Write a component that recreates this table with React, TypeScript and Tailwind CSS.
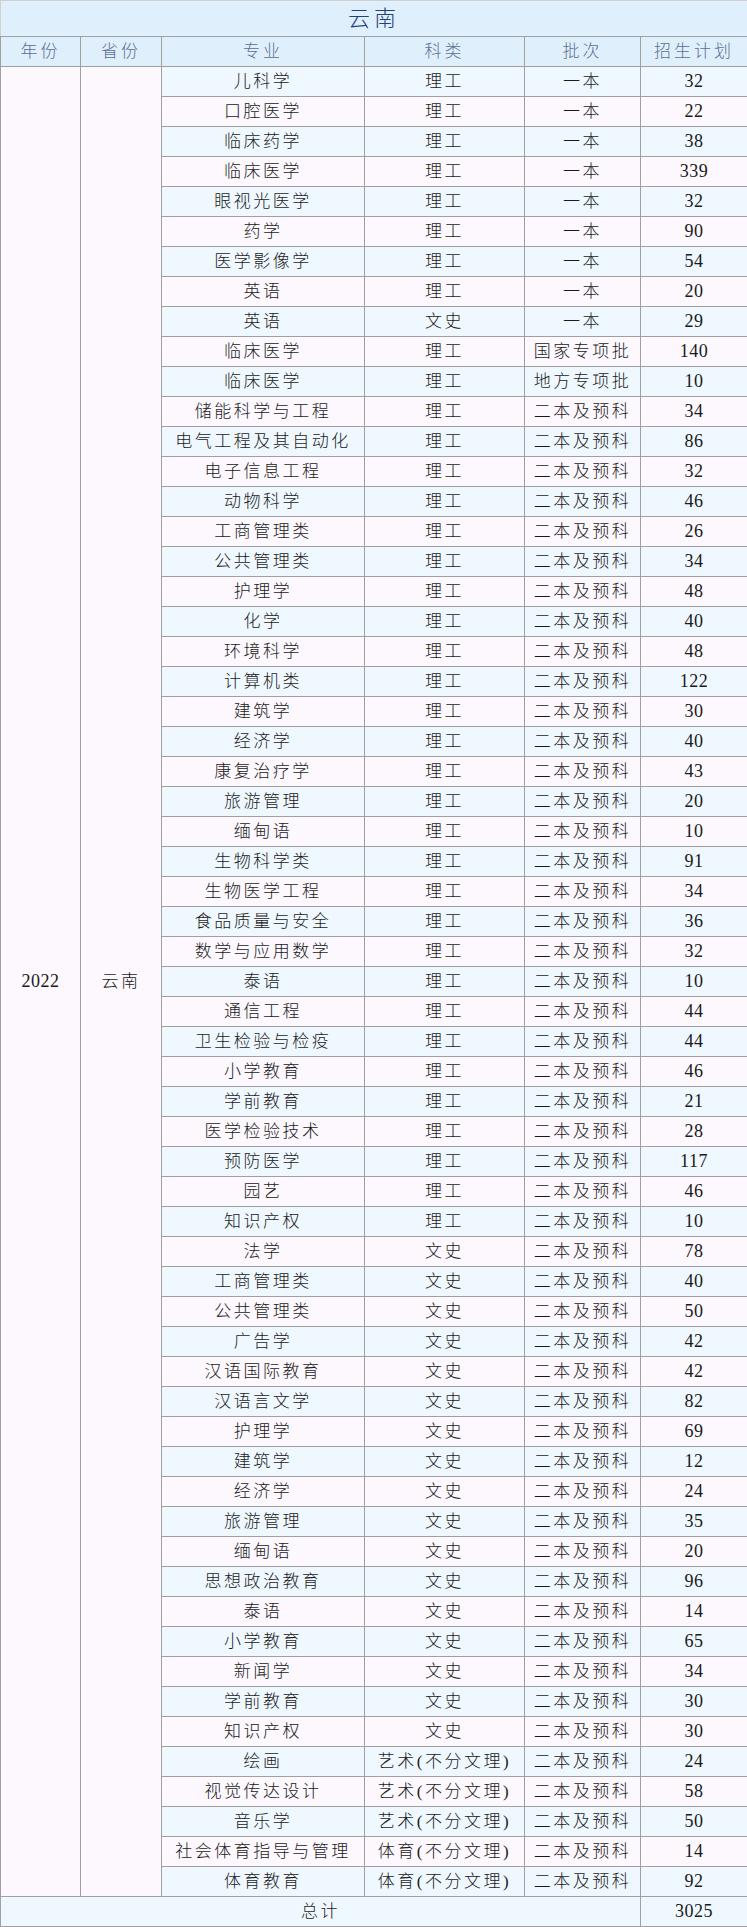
const rows: [string, string, string, number][] = [
  ["儿科学", "理工", "一本", 32],
  ["口腔医学", "理工", "一本", 22],
  ["临床药学", "理工", "一本", 38],
  ["临床医学", "理工", "一本", 339],
  ["眼视光医学", "理工", "一本", 32],
  ["药学", "理工", "一本", 90],
  ["医学影像学", "理工", "一本", 54],
  ["英语", "理工", "一本", 20],
  ["英语", "文史", "一本", 29],
  ["临床医学", "理工", "国家专项批", 140],
  ["临床医学", "理工", "地方专项批", 10],
  ["储能科学与工程", "理工", "二本及预科", 34],
  ["电气工程及其自动化", "理工", "二本及预科", 86],
  ["电子信息工程", "理工", "二本及预科", 32],
  ["动物科学", "理工", "二本及预科", 46],
  ["工商管理类", "理工", "二本及预科", 26],
  ["公共管理类", "理工", "二本及预科", 34],
  ["护理学", "理工", "二本及预科", 48],
  ["化学", "理工", "二本及预科", 40],
  ["环境科学", "理工", "二本及预科", 48],
  ["计算机类", "理工", "二本及预科", 122],
  ["建筑学", "理工", "二本及预科", 30],
  ["经济学", "理工", "二本及预科", 40],
  ["康复治疗学", "理工", "二本及预科", 43],
  ["旅游管理", "理工", "二本及预科", 20],
  ["缅甸语", "理工", "二本及预科", 10],
  ["生物科学类", "理工", "二本及预科", 91],
  ["生物医学工程", "理工", "二本及预科", 34],
  ["食品质量与安全", "理工", "二本及预科", 36],
  ["数学与应用数学", "理工", "二本及预科", 32],
  ["泰语", "理工", "二本及预科", 10],
  ["通信工程", "理工", "二本及预科", 44],
  ["卫生检验与检疫", "理工", "二本及预科", 44],
  ["小学教育", "理工", "二本及预科", 46],
  ["学前教育", "理工", "二本及预科", 21],
  ["医学检验技术", "理工", "二本及预科", 28],
  ["预防医学", "理工", "二本及预科", 117],
  ["园艺", "理工", "二本及预科", 46],
  ["知识产权", "理工", "二本及预科", 10],
  ["法学", "文史", "二本及预科", 78],
  ["工商管理类", "文史", "二本及预科", 40],
  ["公共管理类", "文史", "二本及预科", 50],
  ["广告学", "文史", "二本及预科", 42],
  ["汉语国际教育", "文史", "二本及预科", 42],
  ["汉语言文学", "文史", "二本及预科", 82],
  ["护理学", "文史", "二本及预科", 69],
  ["建筑学", "文史", "二本及预科", 12],
  ["经济学", "文史", "二本及预科", 24],
  ["旅游管理", "文史", "二本及预科", 35],
  ["缅甸语", "文史", "二本及预科", 20],
  ["思想政治教育", "文史", "二本及预科", 96],
  ["泰语", "文史", "二本及预科", 14],
  ["小学教育", "文史", "二本及预科", 65],
  ["新闻学", "文史", "二本及预科", 34],
  ["学前教育", "文史", "二本及预科", 30],
  ["知识产权", "文史", "二本及预科", 30],
  ["绘画", "艺术(不分文理)", "二本及预科", 24],
  ["视觉传达设计", "艺术(不分文理)", "二本及预科", 58],
  ["音乐学", "艺术(不分文理)", "二本及预科", 50],
  ["社会体育指导与管理", "体育(不分文理)", "二本及预科", 14],
  ["体育教育", "体育(不分文理)", "二本及预科", 92],
];

const cell = "border border-[#a0a0a0] p-0 text-center align-middle";
const cn = "text-[17px] font-light tracking-[2.5px] text-[#1a1a1a]";
const num = "text-[18px] tracking-[0.5px] text-[#1a1a1a]";

export default function App() {
  return (
    <div className="w-[747px] bg-white" style={{ fontFamily: '"Liberation Serif", "Noto Sans CJK SC", serif' }}>
      <table className="w-[747px] table-fixed border-collapse border border-[#cfcfcf]">
        <colgroup>
          <col className="w-[80px]" />
          <col className="w-[81px]" />
          <col className="w-[203px]" />
          <col className="w-[160px]" />
          <col className="w-[116px]" />
          <col className="w-[107px]" />
        </colgroup>
        <thead>
          <tr className="h-[36px] bg-[#e0effc]">
            <th colSpan={6} className={`${cell} border-t-[#d0d0d0] border-l-[#d0d0d0] font-light text-[22px] tracking-[4px] text-[#24407a]`}>
              云南
            </th>
          </tr>
          <tr className="h-[30px] bg-[#e0effc]">
            {["年份", "省份", "专业", "科类", "批次", "招生计划"].map((h) => (
              <th key={h} className={`${cell} font-light text-[17px] tracking-[3px] text-[#5b6f92]`}>
                {h}
              </th>
            ))}
          </tr>
        </thead>
        <tbody>
          {rows.map(([major, kind, batch, plan], i) => {
            const bg = i % 2 === 0 ? "bg-[#f0f8ff]" : "bg-[#fcf8fe]";
            return (
              <tr key={i} className="h-[30px]">
                {i === 0 && (
                  <>
                    <td rowSpan={rows.length} className={`${cell} ${num} bg-[#fcf8fe]`}>2022</td>
                    <td rowSpan={rows.length} className={`${cell} ${cn} bg-[#fcf8fe]`}>云南</td>
                  </>
                )}
                <td className={`${cell} ${cn} ${bg} whitespace-nowrap`}>{major}</td>
                <td className={`${cell} ${cn} ${bg} whitespace-nowrap`}>{kind}</td>
                <td className={`${cell} ${cn} ${bg} whitespace-nowrap`}>{batch}</td>
                <td className={`${cell} ${num} ${bg}`}>{plan}</td>
              </tr>
            );
          })}
          <tr className="h-[30px] bg-[#f0f8ff]">
            <td colSpan={5} className={`${cell} ${cn}`}>总计</td>
            <td className={`${cell} ${num}`}>3025</td>
          </tr>
        </tbody>
      </table>
    </div>
  );
}
